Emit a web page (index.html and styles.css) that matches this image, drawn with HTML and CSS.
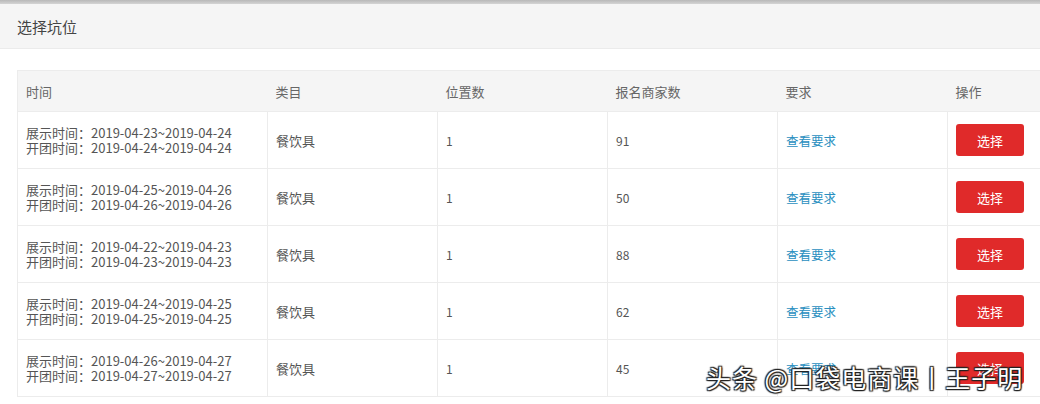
FILE: index.html
```html
<!DOCTYPE html>
<html lang="zh-CN">
<head>
<meta charset="utf-8">
<link rel="stylesheet" href="styles.css">
</head>
<body>
<div class="topbar"></div>
<div class="page-head">选择坑位</div>
<div class="content">
  <table class="grid">
    <colgroup>
      <col class="c-time"><col class="c-mid"><col class="c-mid"><col class="c-mid"><col class="c-mid"><col class="c-mid">
    </colgroup>
    <thead>
      <tr><th>时间</th><th>类目</th><th>位置数</th><th>报名商家数</th><th>要求</th><th>操作</th></tr>
    </thead>
    <tbody>
      <tr>
        <td class="time">展示时间：2019-04-23~2019-04-24<br>开团时间：2019-04-24~2019-04-24</td>
        <td class="cat">餐饮具</td><td>1</td><td>91</td>
        <td><a class="link">查看要求</a></td>
        <td><button class="btn">选择</button></td>
      </tr>
      <tr>
        <td class="time">展示时间：2019-04-25~2019-04-26<br>开团时间：2019-04-26~2019-04-26</td>
        <td class="cat">餐饮具</td><td>1</td><td>50</td>
        <td><a class="link">查看要求</a></td>
        <td><button class="btn">选择</button></td>
      </tr>
      <tr>
        <td class="time">展示时间：2019-04-22~2019-04-23<br>开团时间：2019-04-23~2019-04-23</td>
        <td class="cat">餐饮具</td><td>1</td><td>88</td>
        <td><a class="link">查看要求</a></td>
        <td><button class="btn">选择</button></td>
      </tr>
      <tr>
        <td class="time">展示时间：2019-04-24~2019-04-25<br>开团时间：2019-04-25~2019-04-25</td>
        <td class="cat">餐饮具</td><td>1</td><td>62</td>
        <td><a class="link">查看要求</a></td>
        <td><button class="btn">选择</button></td>
      </tr>
      <tr>
        <td class="time">展示时间：2019-04-26~2019-04-27<br>开团时间：2019-04-27~2019-04-27</td>
        <td class="cat">餐饮具</td><td>1</td><td>45</td>
        <td><a class="link">查看要求</a></td>
        <td><button class="btn">选择</button></td>
      </tr>
    </tbody>
  </table>
</div>
<div class="watermark">头条 @口袋电商课丨王子明</div>
</body>
</html>
```
FILE: styles.css
```css
html, body {
  margin: 0;
  padding: 0;
  background: #fff;
  overflow: hidden;
  width: 1040px;
  height: 404px;
  font-family: "Noto Sans CJK SC", "Noto Sans", sans-serif;
  color: #555;
}
body { position: relative; }
.topbar {
  height: 4px;
  background: linear-gradient(#b8b8b8, #d4d4d4);
}
.page-head {
  height: 45px;
  box-sizing: border-box;
  background: #f5f5f5;
  border-bottom: 1px solid #ebebeb;
  padding-left: 17px;
  font-size: 15px;
  line-height: 45px;
  color: #444;
}
.content {
  padding: 21px 0 0 17px;
  overflow: hidden;
}
.grid {
  border-collapse: collapse;
  table-layout: fixed;
  width: 1100px;
  border: 1px solid #ececec;
}
.c-time { width: 250px; }
.c-mid { width: 170px; }
.grid th {
  height: 41px;
  box-sizing: border-box;
  background: #f5f5f5;
  text-align: left;
  font-weight: normal;
  font-size: 13px;
  color: #666;
  padding: 0 0 0 8px;
  border: none;
}
.grid td {
  height: 57px;
  box-sizing: border-box;
  padding: 0 0 0 8px;
  font-size: 12px;
  color: #555;
  border: 1px solid #ececec;
  vertical-align: middle;
}
.grid td.time {
  font-size: 13px;
  line-height: 15px;
  color: #555;
}
.grid td.cat { font-size: 13px; }
.link {
  color: #2a8fc0;
  font-size: 12.5px;
  cursor: pointer;
}
.btn {
  width: 68px;
  height: 32px;
  border: none;
  border-radius: 3px;
  background: #e02a2a;
  color: #fff;
  font-family: inherit;
  font-size: 13px;
  padding: 0;
}
.watermark {
  position: absolute;
  left: 706px;
  top: 360px;
  font-size: 25px;
  line-height: 34px;
  color: #fff;
  letter-spacing: 1px;
  text-shadow: 0 0 2px #222, 1px 1px 1px #222, -1px -1px 1px #222, 1px -1px 1px #222, -1px 1px 1px #222;
}
```
